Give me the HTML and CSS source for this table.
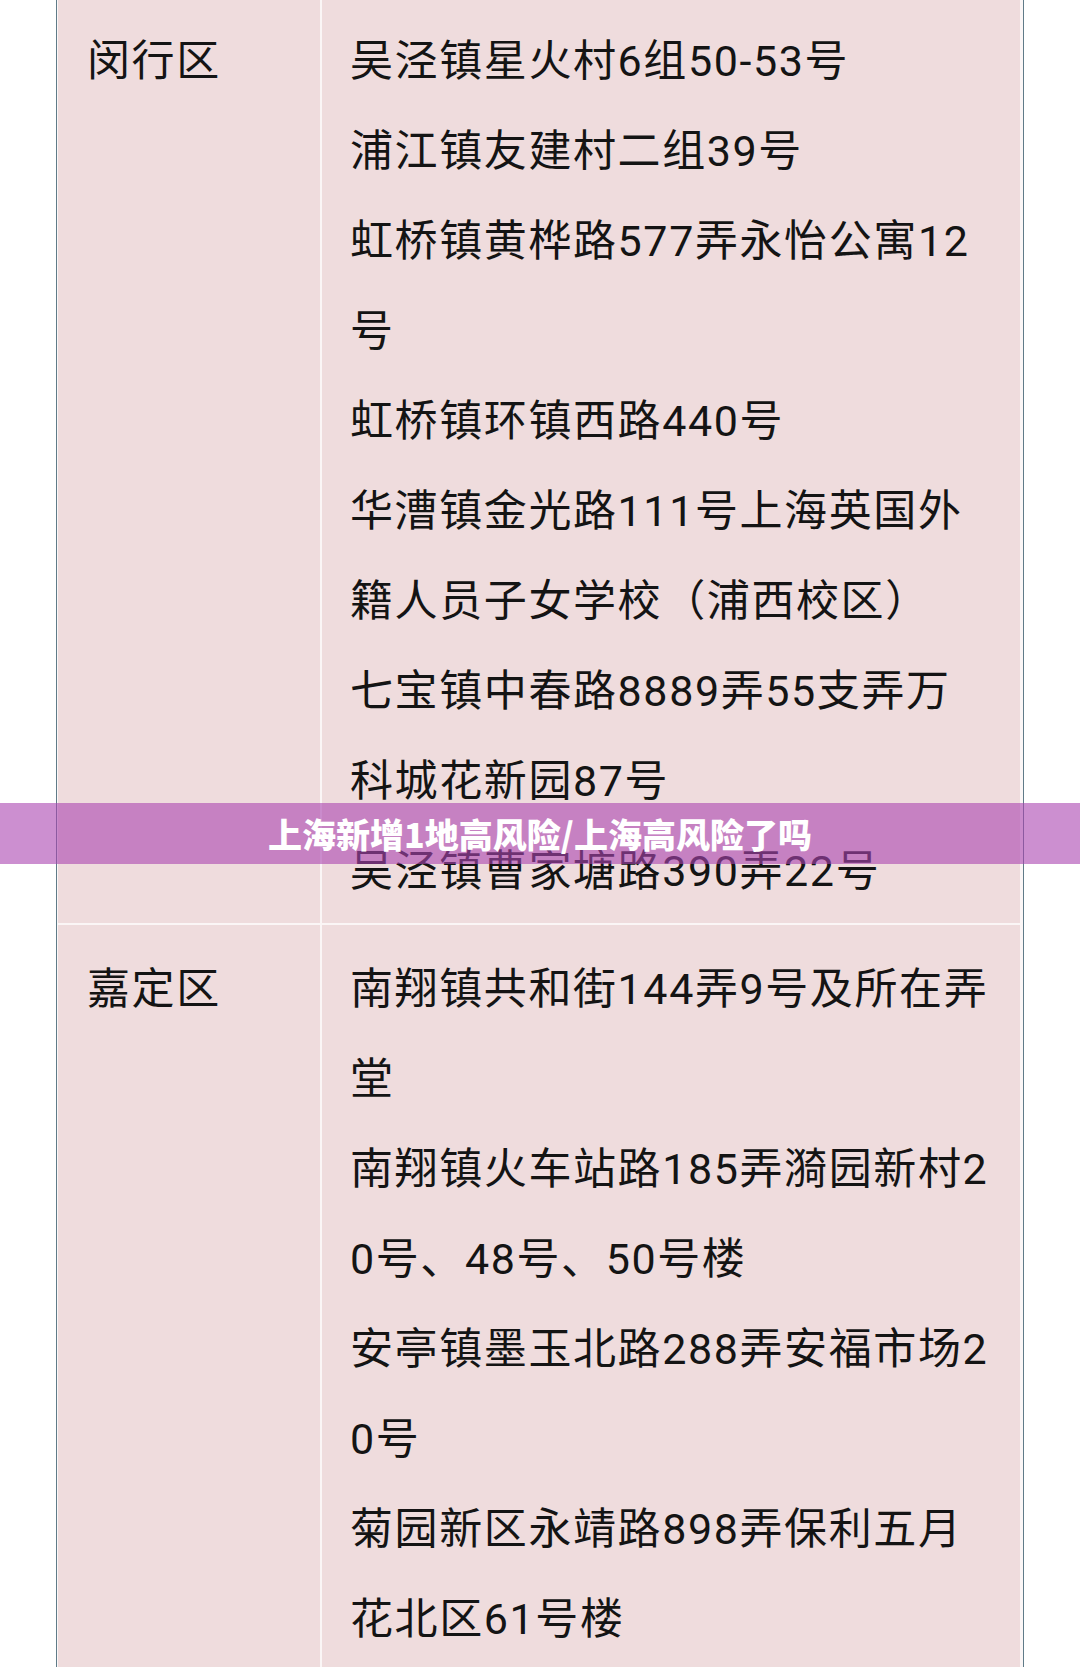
FILE: index.html
```html
<!DOCTYPE html>
<html lang="zh-CN">
<head>
<meta charset="utf-8">
<title>上海新增1地高风险/上海高风险了吗</title>
<link rel="stylesheet" href="styles.css">
</head>
<body>
<div class="page">
  <div class="table">
    <div class="cell cell-district">闵行区</div>
    <div class="cell cell-addr">
      <p>吴泾镇星火村6组50-53号</p>
      <p>浦江镇友建村二组39号</p>
      <p>虹桥镇黄桦路577弄永怡公寓12<br>号</p>
      <p>虹桥镇环镇西路440号</p>
      <p>华漕镇金光路111号上海英国外<br>籍人员子女学校（浦西校区）</p>
      <p>七宝镇中春路8889弄55支弄万<br>科城花新园87号</p>
      <p>吴泾镇曹家塘路390弄22号</p>
    </div>
    <div class="cell cell-district cell-next">嘉定区</div>
    <div class="cell cell-addr cell-next">
      <p>南翔镇共和街144弄9号及所在弄<br>堂</p>
      <p>南翔镇火车站路185弄漪园新村2<br>0号、48号、50号楼</p>
      <p>安亭镇墨玉北路288弄安福市场2<br>0号</p>
      <p>菊园新区永靖路898弄保利五月<br>花北区61号楼</p>
    </div>
  </div>
  <div class="banner">上海新增1地高风险/上海高风险了吗</div>
</div>
</body>
</html>
```
FILE: styles.css
```css
html, body {
  margin: 0;
  padding: 0;
  background: #ffffff;
}
body {
  font-family: "Roboto", "Noto Sans CJK SC", sans-serif;
  color: #141414;
}
.page {
  position: relative;
  width: 1080px;
  height: 1667px;
  overflow: hidden;
}
.table {
  margin-left: 56px;
  width: 963px;
  border-left: 1px solid #5f7b88;
  border-right: 1px solid #5f7b88;
  padding: 0 2px 0 1px;
  background: #fbf6f6;
  display: grid;
  grid-template-columns: 262px 698px;
  column-gap: 2px;
  row-gap: 2px;
}
.cell {
  background: #efdcdd;
  font-size: 43px;
  line-height: 90px;
  letter-spacing: 1.6px;
  padding: 16px 4px 7px 28px;
  white-space: nowrap;
}
.cell-district {
  padding-left: 29px;
}
.cell-next {
  padding-top: 19px;
}
.cell p {
  margin: 0;
}
.banner {
  position: absolute;
  left: 0;
  right: 0;
  top: 803px;
  height: 61px;
  background: rgba(170, 68, 177, 0.6);
  color: #ffffff;
  font-family: "Noto Sans CJK SC", sans-serif;
  font-size: 34px;
  font-weight: 900;
  line-height: 61px;
  text-align: center;
}
```
